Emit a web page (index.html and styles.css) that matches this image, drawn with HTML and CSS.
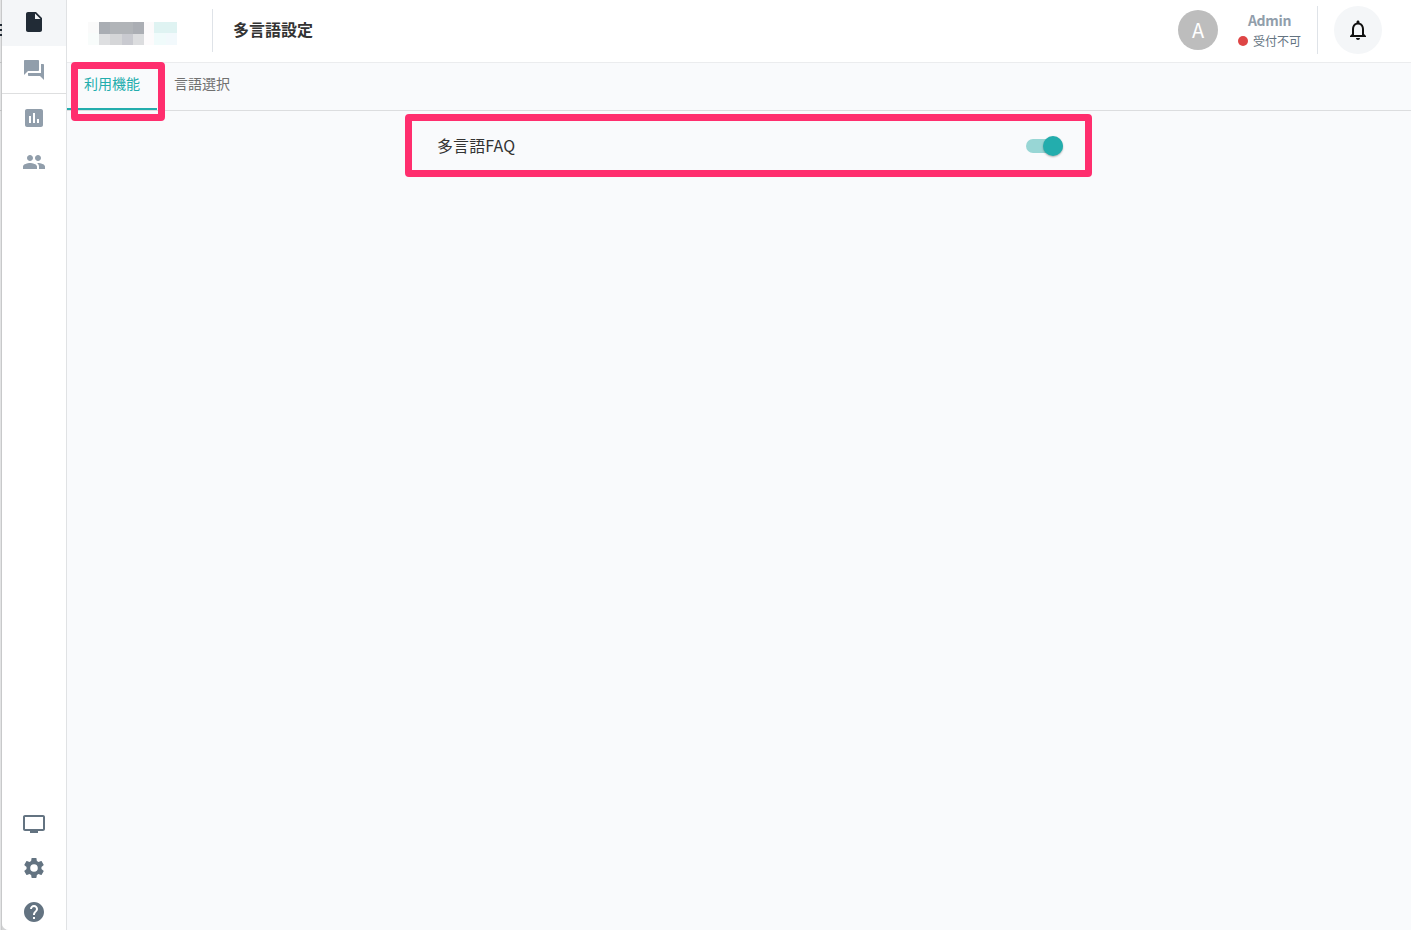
FILE: index.html
```
<!DOCTYPE html>
<html lang="ja">
<head>
    <meta charset="UTF-8">
    <meta name="viewport" content="width=device-width, initial-scale=1.0">
    <title>多言語設定</title>
    <link rel="stylesheet" href="styles.css">
</head>
<body>
    <div class="edge">
        <svg width="2" height="112" viewBox="0 0 2 112" shape-rendering="crispEdges">
            <path fill="#222b35" d="M0 24h2v2H0zM0 29h2v2H0zM0 34h2v2H0z"/>
            <path fill="#c0c1c2" d="M0 62h2v1H0zM0 110h2v1H0z"/>
        </svg>
    </div>
    <div class="app">
        <nav class="sidebar">
            <a class="nav-item active">
                <svg class="icon" viewBox="0 0 24 24"><path d="M6 2c-1.1 0-1.99.9-1.99 2L4 20c0 1.1.89 2 1.99 2H18c1.1 0 2-.9 2-2V8l-6-6H6zm7 7V3.5L18.5 9H13z"/></svg>
            </a>
            <a class="nav-item nav-chat">
                <svg class="icon" viewBox="0 0 24 24"><path d="M21 6h-2v9H6v2c0 .55.45 1 1 1h11l4 4V7c0-.55-.45-1-1-1zm-4 6V3c0-.55-.45-1-1-1H3c-.55 0-1 .45-1 1v14l4-4h10c.55 0 1-.45 1-1z"/></svg>
            </a>
            <a class="nav-item nav-small nav-chart">
                <svg class="icon" viewBox="0 0 24 24"><path d="M19 3H5c-1.1 0-2 .9-2 2v14c0 1.1.9 2 2 2h14c1.1 0 2-.9 2-2V5c0-1.1-.9-2-2-2zM9 17H7v-7h2v7zm4 0h-2V7h2v10zm4 0h-2v-4h2v4z"/></svg>
            </a>
            <a class="nav-item nav-small">
                <svg class="icon" viewBox="0 0 24 24"><path d="M16 11c1.66 0 2.99-1.34 2.99-3S17.66 5 16 5c-1.66 0-3 1.34-3 3s1.34 3 3 3zm-8 0c1.66 0 2.99-1.34 2.99-3S9.66 5 8 5C6.34 5 5 6.34 5 8s1.34 3 3 3zm0 2c-2.33 0-7 1.17-7 3.5V19h14v-2.5c0-2.33-4.67-3.5-7-3.5zm8 0c-.29 0-.62.02-.97.05 1.16.84 1.97 1.97 1.97 3.45V19h6v-2.5c0-2.33-4.67-3.5-7-3.5z"/></svg>
            </a>
            <div class="nav-bottom">
                <a class="nav-item nav-small">
                    <svg class="icon" viewBox="0 0 24 24"><path d="M21 3H3c-1.1 0-2 .9-2 2v12c0 1.1.9 2 2 2h5v2h8v-2h5c1.1 0 1.99-.9 1.99-2L23 5c0-1.1-.9-2-2-2zm0 14H3V5h18v12z"/></svg>
                </a>
                <a class="nav-item nav-small">
                    <svg class="icon" viewBox="0 0 24 24"><path d="M19.43 12.98c.04-.32.07-.64.07-.98s-.03-.66-.07-.98l2.11-1.65c.19-.15.24-.42.12-.64l-2-3.46c-.12-.22-.39-.3-.61-.22l-2.49 1c-.52-.4-1.08-.73-1.69-.98l-.38-2.65C14.46 2.18 14.25 2 14 2h-4c-.25 0-.46.18-.49.42l-.38 2.65c-.61.25-1.17.59-1.69.98l-2.49-1c-.23-.09-.49 0-.61.22l-2 3.46c-.13.22-.07.49.12.64l2.11 1.65c-.04.32-.07.65-.07.98s.03.66.07.98l-2.11 1.65c-.19.15-.24.42-.12.64l2 3.46c.12.22.39.3.61.22l2.49-1c.52.4 1.08.73 1.69.98l.38 2.65c.03.24.24.42.49.42h4c.25 0 .46-.18.49-.42l.38-2.65c.61-.25 1.17-.59 1.69-.98l2.49 1c.23.09.49 0 .61-.22l2-3.46c.12-.22.07-.49-.12-.64l-2.11-1.65zM12 15.8a3.8 3.8 0 1 1 0-7.6 3.8 3.8 0 0 1 0 7.6z"/></svg>
                </a>
                <a class="nav-item nav-small">
                    <svg class="icon" viewBox="0 0 24 24"><path d="M12 2C6.48 2 2 6.48 2 12s4.48 10 10 10 10-4.48 10-10S17.52 2 12 2zm1 17h-2v-2h2v2zm2.07-7.75l-.9.92C13.45 12.9 13 13.5 13 15h-2v-.5c0-1.1.45-2.1 1.17-2.83l1.24-1.26c.37-.36.59-.86.59-1.41 0-1.1-.9-2-2-2s-2 .9-2 2H8c0-2.21 1.79-4 4-4s4 1.79 4 4c0 .88-.36 1.68-.93 2.25z"/></svg>
                </a>
            </div>
        </nav>
        <div class="main">
            <header class="header">
                <div class="logo">
                    <svg width="89" height="23" viewBox="0 0 89 23" shape-rendering="crispEdges">
                        <rect width="11" height="11" fill="#fafafa"/>
                        <rect x="11" width="11" height="12" fill="#a9adb3"/>
                        <rect x="22" width="23" height="12" fill="#b1b4b8"/>
                        <rect x="45" width="11" height="12" fill="#abaeb4"/>
                        <rect x="56" width="10" height="11" fill="#fcfafb"/>
                        <rect x="66" width="23" height="11" fill="#dff3f2"/>
                        <rect y="11" width="11" height="12" fill="#f8fcfb"/>
                        <rect x="11" y="12" width="11" height="11" fill="#dedfe1"/>
                        <rect x="22" y="12" width="12" height="11" fill="#d5d6d8"/>
                        <rect x="34" y="12" width="11" height="11" fill="#c9cad0"/>
                        <rect x="45" y="12" width="11" height="11" fill="#dcdddf"/>
                        <rect x="56" y="11" width="10" height="12" fill="#fdfbfc"/>
                        <rect x="66" y="11" width="12" height="12" fill="#f0fbfb"/>
                        <rect x="78" y="11" width="11" height="12" fill="#f2f9fc"/>
                    </svg>
                </div>
                <h1 class="title">多言語設定</h1>
                <div class="avatar">A</div>
                <div class="user">
                    <div class="user-name">Admin</div>
                    <div class="user-status"><span class="dot"></span>受付不可</div>
                </div>
                <button class="bell">
                    <svg class="icon" viewBox="0 0 24 24"><path d="M12 22c1.1 0 2-.9 2-2h-4c0 1.1.9 2 2 2zm6-6v-5c0-3.07-1.63-5.64-4.5-6.32V4c0-.83-.67-1.5-1.5-1.5s-1.5.67-1.5 1.5v.68C7.64 5.36 6 7.92 6 11v5l-2 2v1h16v-1l-2-2zm-2 1H8v-6c0-2.48 1.51-4.5 4-4.5s4 2.02 4 4.5v6z"/></svg>
                </button>
            </header>
            <div class="tabs">
                <a class="tab selected">利用機能</a>
                <a class="tab">言語選択</a>
                <span class="highlight highlight-tab"></span>
            </div>
            <div class="content">
                <div class="setting">
                    <span class="setting-label">多言語FAQ</span>
                    <span class="switch"><span class="thumb"></span></span>
                    <span class="highlight highlight-setting"></span>
                </div>
            </div>
        </div>
    </div>
</body>
</html>
```

FILE: styles.css
```
* {
    box-sizing: border-box;
}
body {
    margin: 0;
    height: 930px;
    display: flex;
    overflow: hidden;
    background-color: #d3d4d5;
    font-family: "Noto Sans CJK JP", sans-serif;
    color: #333;
}
.edge {
    width: 2px;
    flex-shrink: 0;
    background: linear-gradient(to right, #e2e3e4 50%, #c8c9ca 50%);
}
.edge svg {
    display: block;
}
.app {
    flex: 1;
    display: flex;
    background-color: #f9fafc;
    border-bottom-left-radius: 7px;
    overflow: hidden;
}
.icon {
    width: 24px;
    height: 24px;
    fill: currentColor;
    display: block;
}

/* sidebar */
.sidebar {
    width: 65px;
    flex-shrink: 0;
    display: flex;
    flex-direction: column;
    background-color: #fff;
    border-right: 1px solid #e0e2e4;
}
.nav-item {
    height: 48px;
    display: flex;
    align-items: center;
    justify-content: center;
    color: #919eab;
}
.nav-item.active {
    height: 46px;
    padding-bottom: 2px;
    background-color: #f4f6f8;
    color: #212b36;
}
.nav-chat {
    border-bottom: 1px solid #dedfe0;
}
.nav-small {
    height: 44px;
}
.nav-chart {
    margin-top: 2px;
}
.nav-bottom {
    margin-top: auto;
    margin-bottom: -4px;
}
.nav-bottom .nav-item {
    color: #637381;
}

/* header */
.main {
    flex: 1;
    display: flex;
    flex-direction: column;
}
.header {
    height: 63px;
    display: flex;
    align-items: center;
    padding: 0 29px 3px 21px;
    background-color: #fff;
    border-bottom: 1px solid #ebecee;
}
.logo {
    width: 125px;
    height: 43px;
    padding-top: 13px;
    margin-top: 1px;
    border-right: 1px solid #dfe3e8;
}
.logo svg {
    display: block;
}
.title {
    margin: 0 auto 0 20px;
    padding-bottom: 2px;
    font-size: 16px;
    line-height: 24px;
    font-weight: bold;
}
.avatar {
    width: 40px;
    height: 40px;
    border-radius: 50%;
    background-color: #bdbdbd;
    color: #fff;
    font-size: 20px;
    line-height: 40px;
    text-align: center;
}
.user {
    width: 100px;
    height: 48px;
    padding: 3px 16px 0 20px;
    border-right: 1px solid #dfe3e8;
}
.user-name {
    font-size: 14px;
    font-weight: bold;
    line-height: 23px;
    letter-spacing: -0.3px;
    text-align: center;
    color: #919eab;
}
.user-status {
    display: flex;
    align-items: center;
    gap: 5px;
    font-size: 12px;
    line-height: 18px;
    white-space: nowrap;
    color: #637381;
}
.dot {
    width: 10px;
    height: 10px;
    flex-shrink: 0;
    border-radius: 50%;
    background-color: #de4545;
}
.bell {
    width: 48px;
    height: 48px;
    margin-left: 16px;
    padding: 0;
    display: flex;
    align-items: center;
    justify-content: center;
    border: none;
    border-radius: 50%;
    background-color: #f4f6f8;
    color: #111;
}

/* tabs */
.tabs {
    position: relative;
    height: 48px;
    display: flex;
    border-bottom: 1px solid #dcdddf;
}
.tab {
    width: 90px;
    padding: 10px 0 0 17px;
    font-size: 14px;
    line-height: 21px;
    color: #707070;
}
.tab.selected {
    color: #23adad;
    border-bottom: 2px solid #23adad;
}

/* content */
.content {
    display: flex;
    justify-content: center;
}
.setting {
    position: relative;
    width: 626px;
    height: 70px;
    margin-left: 22px;
    display: flex;
    align-items: center;
    justify-content: space-between;
}
.setting-label {
    padding-bottom: 2px;
    font-size: 16px;
    line-height: 24px;
    letter-spacing: 0.1px;
}
.switch {
    width: 37px;
    height: 14px;
    border-radius: 7px;
    display: flex;
    align-items: center;
    justify-content: flex-end;
    background-color: #98d6d5;
}
.thumb {
    width: 20px;
    height: 20px;
    flex-shrink: 0;
    border-radius: 50%;
    background-color: #23adad;
    box-shadow: 0 1px 2px rgba(0, 0, 0, 0.3);
}

/* frames drawn over the settings to use */
.highlight {
    position: absolute;
    border: 7px solid #ff2e6e;
    border-radius: 4px;
}
.highlight-tab {
    left: 4px;
    top: -1px;
    width: 94px;
    height: 59px;
}
.highlight-setting {
    left: -32px;
    top: 3px;
    width: 687px;
    height: 63px;
}
```
